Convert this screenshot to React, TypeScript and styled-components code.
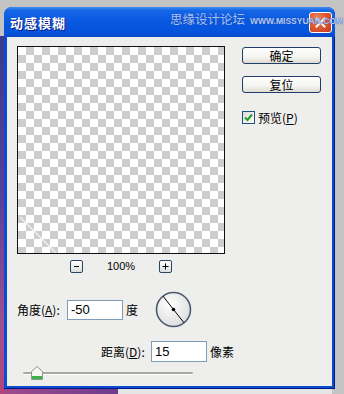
import styled, { createGlobalStyle } from 'styled-components';

const GlobalStyle = createGlobalStyle`
  html, body {
    margin: 0;
    padding: 0;
  }
  body {
    font-family: "Noto Sans CJK SC", "Liberation Sans", sans-serif;
  }
`;

const Desktop = styled.div`
  width: 344px;
  height: 394px;
  overflow: hidden;
  box-sizing: border-box;
  padding: 7px 0 0 4px;
  background:
    linear-gradient(180deg, #3a3a8c 0%, #5a3f9a 45%, #a0508e 80%, #b3447c 100%) left 0 top 36px / 4px 360px no-repeat,
    linear-gradient(90deg, #a24a8c, #6c3c8e) left 0 bottom 0 / 118px 6px no-repeat,
    linear-gradient(#e4e4e4, #e4e4e4) left 118px bottom 0 / 214px 6px no-repeat,
    #c3c3c3;
`;

const Window = styled.div`
  width: 331px;
  height: 382px;
  display: flex;
  flex-direction: column;
  background: #0b4bd0;
  border-radius: 8px 8px 0 0;
  box-shadow: inset -1px -1px 0 #00178a;
`;

const TitleBar = styled.div`
  position: relative;
  height: 30px;
  display: flex;
  align-items: center;
  padding: 0 3px 0 6px;
  border-radius: 8px 8px 0 0;
  background: linear-gradient(180deg, #3f8cf3 0%, #1466e6 12%, #0858e0 50%, #0653dc 85%, #0a47c4 100%);
`;

const Title = styled.div`
  color: #fff;
  font-size: 13px;
  font-weight: bold;
  letter-spacing: 1px;
  text-shadow: 1px 1px 0 #0a1a80;
`;

const Watermark = styled.div`
  position: absolute;
  z-index: 2;
  left: 166px;
  top: 2px;
  width: 165px;
  display: flex;
  align-items: baseline;
  gap: 5px;
  white-space: nowrap;
  pointer-events: none;
`;

const WatermarkCn = styled.span`
  font-size: 12.5px;
  color: #a9c2f4;
  text-shadow: 0 0 1px #1b3f9e;
`;

const WatermarkEn = styled.span`
  font-family: "Liberation Sans", sans-serif;
  font-size: 8.5px;
  font-weight: bold;
  color: #b5c9f3;
  text-shadow: 0 0 1px #1b3f9e;
`;

const CloseButton = styled.div`
  position: relative;
  z-index: 0;
  margin-left: auto;
  width: 21px;
  height: 19px;
  display: flex;
  align-items: center;
  justify-content: center;
  border: 1px solid #fff;
  border-radius: 3px;
  background: radial-gradient(circle at 35% 30%, #f08a64 0%, #df5a32 45%, #c23b1a 100%);
`;

const Body = styled.div`
  flex: 1;
  margin: 0 3px 3px;
  padding: 9px 0 0 10px;
  background: #eeeeec;
  display: flex;
  flex-direction: column;
  font-size: 12px;
  color: #000;
`;

const TopRow = styled.div`
  display: flex;
  align-items: flex-start;
`;

const PreviewColumn = styled.div`
  display: flex;
  flex-direction: column;
  width: 208px;
`;

const Preview = styled.div`
  position: relative;
  width: 208px;
  height: 208px;
  box-sizing: border-box;
  border: 1px solid #111;
  background-color: #fff;
  background-image: repeating-conic-gradient(#cdcdcd 0 25%, #ffffff 0 50%);
  background-size: 16px 16px;
  overflow: hidden;
`;

const Streak = styled.svg`
  position: absolute;
  left: 0;
  bottom: 0;
`;

const ZoomRow = styled.div`
  margin-top: 5px;
  height: 14px;
  display: flex;
  align-items: center;
  justify-content: center;
  gap: 24px;
`;

const ZoomButton = styled.div`
  width: 11px;
  height: 11px;
  border: 1px solid #2c4560;
  border-radius: 2px;
  background: linear-gradient(#ffffff, #dedede);
  display: flex;
  align-items: center;
  justify-content: center;
`;

const ZoomValue = styled.span`
  font-family: "Liberation Sans", sans-serif;
  font-size: 11px;
`;

const Side = styled.div`
  margin-left: 17px;
  padding-top: 1px;
  display: flex;
  flex-direction: column;
  gap: 12px;
`;

const PushButton = styled.div`
  width: 79px;
  height: 17px;
  box-sizing: border-box;
  border: 1px solid #1f3f6a;
  border-radius: 3px;
  background: linear-gradient(180deg, #ffffff 0%, #f4f4f0 60%, #dedbd2 100%);
  display: flex;
  align-items: center;
  justify-content: center;
  font-size: 12px;
  line-height: 1;
`;

const CheckRow = styled.label`
  margin-top: 4px;
  display: flex;
  align-items: center;
  gap: 3px;
  font-size: 12px;
`;

const CheckBox = styled.span`
  width: 11px;
  height: 11px;
  border: 1px solid #1c5180;
  background: linear-gradient(135deg, #dcdcd6, #ffffff);
  display: flex;
  align-items: center;
  justify-content: center;
`;

const FieldRow = styled.div<{ $indent?: number; $top: number }>`
  display: flex;
  align-items: center;
  margin-top: ${(p) => p.$top}px;
  padding-left: ${(p) => p.$indent ?? 0}px;
`;

const FieldLabel = styled.span`
  width: 50px;
  font-size: 12px;
  white-space: nowrap;
`;

const Field = styled.div<{ $h: number }>`
  width: 56px;
  height: ${(p) => p.$h}px;
  box-sizing: border-box;
  border: 1px solid #7f9db9;
  background: #fff;
  display: flex;
  align-items: center;
  padding-left: 3px;
  font-family: "Liberation Sans", sans-serif;
  font-size: 13px;
`;

const Unit = styled.span`
  margin-left: 3px;
  font-size: 12px;
`;

const Dial = styled.svg`
  margin-left: 17px;
`;

const SliderRow = styled.div`
  margin-top: 4px;
  padding-left: 6px;
  position: relative;
  width: 170px;
  height: 13px;
  display: flex;
  align-items: center;
`;

const Track = styled.div`
  width: 170px;
  height: 2px;
  border-radius: 1px;
  background: #a8a8a4;
  box-shadow: 0 1px 0 #ffffff;
`;

const Thumb = styled.svg`
  position: absolute;
  left: 14px;
  top: 0;
`;

const App = () => {
  return (
    <>
      <GlobalStyle />
      <Desktop>
        <Window>
          <TitleBar>
            <Title>动感模糊</Title>
            <CloseButton>
              <svg width="11" height="11" viewBox="0 0 11 11">
                <path d="M1.5 1.5 L9.5 9.5 M9.5 1.5 L1.5 9.5" stroke="#fff" strokeWidth="2" strokeLinecap="square" />
              </svg>
            </CloseButton>
            <Watermark>
              <WatermarkCn>思缘设计论坛</WatermarkCn>
              <WatermarkEn>WWW.MISSYUAN.COM</WatermarkEn>
            </Watermark>
          </TitleBar>

          <Body>
            <TopRow>
              <PreviewColumn>
                <Preview>
                  <Streak width="60" height="40" viewBox="0 0 60 40">
                    <line x1="2" y1="4" x2="38" y2="40" stroke="#ffffff" strokeOpacity="0.7" strokeWidth="1.5" />
                  </Streak>
                </Preview>
                <ZoomRow>
                  <ZoomButton>
                    <svg width="7" height="7" viewBox="0 0 7 7">
                      <path d="M1 3.5 H6" stroke="#000" strokeWidth="1" />
                    </svg>
                  </ZoomButton>
                  <ZoomValue>100%</ZoomValue>
                  <ZoomButton>
                    <svg width="7" height="7" viewBox="0 0 7 7">
                      <path d="M0.5 3.5 H6.5 M3.5 0.5 V6.5" stroke="#000" strokeWidth="1" />
                    </svg>
                  </ZoomButton>
                </ZoomRow>
              </PreviewColumn>

              <Side>
                <PushButton>确定</PushButton>
                <PushButton>复位</PushButton>
                <CheckRow>
                  <CheckBox>
                    <svg width="9" height="9" viewBox="0 0 9 9">
                      <path d="M1 4.5 L3.5 7 L8 1.5" stroke="#21a121" strokeWidth="2" fill="none" />
                    </svg>
                  </CheckBox>
                  <span>
                    预览(<u>P</u>)
                  </span>
                </CheckRow>
              </Side>
            </TopRow>

            <FieldRow $top={18}>
              <FieldLabel>
                角度(<u>A</u>):
              </FieldLabel>
              <Field $h={20}>-50</Field>
              <Unit>度</Unit>
              <Dial width="37" height="37" viewBox="0 0 37 37">
                <defs>
                  <radialGradient id="dialFill" cx="40%" cy="35%" r="70%">
                    <stop offset="0%" stopColor="#ffffff" />
                    <stop offset="100%" stopColor="#dcdcdc" />
                  </radialGradient>
                </defs>
                <circle cx="18.5" cy="18.5" r="17" fill="url(#dialFill)" stroke="#4d5a70" strokeWidth="1.6" />
                <line x1="8" y1="5.2" x2="29" y2="31.8" stroke="#000" strokeWidth="1" />
                <circle cx="18.5" cy="18.5" r="1.8" fill="#000" />
              </Dial>
            </FieldRow>

            <FieldRow $top={13} $indent={84}>
              <FieldLabel>
                距离(<u>D</u>):
              </FieldLabel>
              <Field $h={21}>15</Field>
              <Unit>像素</Unit>
            </FieldRow>

            <SliderRow>
              <Track />
              <Thumb width="12" height="14" viewBox="0 0 12 14">
                <path d="M6 0.5 L11.5 5.5 V13.5 H0.5 V5.5 Z" fill="#f6f6f2" stroke="#8c9a8c" />
                <rect x="1" y="10" width="10" height="3" fill="#3cb04a" />
              </Thumb>
            </SliderRow>
          </Body>
        </Window>
      </Desktop>
    </>
  );
};

export default App;
